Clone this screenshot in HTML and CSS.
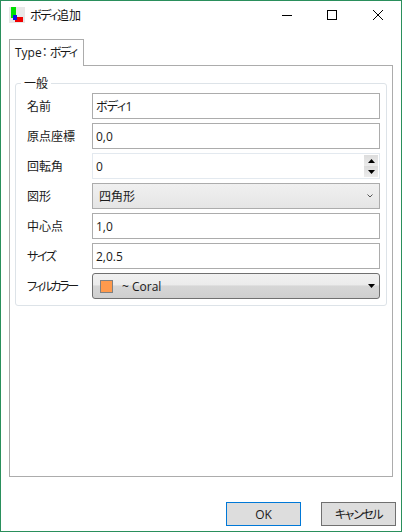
FILE: index.html
```html
<!DOCTYPE html>
<html lang="ja">
<head>
<meta charset="utf-8">
<title>ボディ追加</title>
<link rel="stylesheet" href="styles.css">
</head>
<body>
<div class="window">
  <header class="titlebar">
    <svg class="app-icon" width="16" height="16" viewBox="0 0 16 16">
      <rect x="0" y="0" width="16" height="16" fill="#e8e8e8"/>
      <rect x="2" y="0" width="5" height="11" fill="#00e000"/>
      <rect x="6" y="10" width="8" height="5" fill="#f00000"/>
      <rect x="4" y="8" width="4" height="5" fill="#1010e0"/>
    </svg>
    <span class="title"><span class="kana">ボディ</span>追加</span>
    <div class="caption">
      <svg width="46" height="28" viewBox="0 0 46 28"><path d="M19 14.500h10" stroke="#000" fill="none"/></svg>
      <svg width="46" height="28" viewBox="0 0 46 28"><rect x="18.500" y="9.500" width="9" height="9" stroke="#000" fill="none"/></svg>
      <svg width="46" height="28" viewBox="0 0 46 28"><path d="M18 9l10 10M28 9l-10 10" stroke="#000" fill="none"/></svg>
    </div>
  </header>
  <main class="content">
    <div class="tabstrip"><div class="tab"><span class="tab-type">Type：</span><span class="kana">ボディ</span></div></div>
    <section class="panel">
      <fieldset class="group">
        <legend class="legend">一般</legend>
        <div class="form">
          <label class="lbl">名前</label>
          <div class="field"><span class="kana kana-loose">ボディ</span>1</div>
          <label class="lbl">原点座標</label>
          <div class="field">0,0</div>
          <label class="lbl">回転角</label>
          <div class="field field-spin">
            <span>0</span>
            <div class="spin">
              <div class="spin-btn"><svg width="7" height="4" viewBox="0 0 7 4"><path d="M3.500 0L7 4H0z" fill="#000"/></svg></div>
              <div class="spin-btn"><svg width="7" height="4" viewBox="0 0 7 4"><path d="M0 0h7L3.500 4z" fill="#000"/></svg></div>
            </div>
          </div>
          <label class="lbl">図形</label>
          <div class="combo">
            <span>四角形</span>
            <svg width="6" height="4" viewBox="0 0 6 4"><path d="M.5 .5L3 3L5.500 .5" stroke="#555" fill="none"/></svg>
          </div>
          <label class="lbl">中心点</label>
          <div class="field">1,0</div>
          <label class="lbl"><span class="kana">サイズ</span></label>
          <div class="field">2,0.5</div>
          <label class="lbl"><span class="kana kana-tight">フィルカラー</span></label>
          <div class="color">
            <i class="swatch"></i>
            <span class="color-name">~ Coral</span>
            <svg width="7" height="4" viewBox="0 0 7 4"><path d="M0 0h7L3.500 4z" fill="#000"/></svg>
          </div>
        </div>
      </fieldset>
    </section>
    <footer class="actions">
      <button class="btn btn-default">OK</button>
      <button class="btn btn-cancel"><span class="kana">キャンセル</span></button>
    </footer>
  </main>
</div>
</body>
</html>
```
FILE: styles.css
```css
* { box-sizing: border-box; }
html, body { margin: 0; padding: 0; background: #fff; }
body {
  font-family: "Open Sans", "Noto Sans CJK JP", sans-serif;
  font-size: 12px;
  color: #1a1a1a;
}
.kana { font-feature-settings: "palt"; letter-spacing: -1.4px; }
.kana-tight { letter-spacing: -2.2px; }
.kana-loose { letter-spacing: -0.6px; }
.tab-type { font-feature-settings: "palt"; margin-right: 2px; }
.window {
  width: 402px;
  height: 532px;
  border: 1px solid #2a8f5c;
  display: flex;
  flex-direction: column;
  background: #fff;
}
.titlebar {
  height: 28px;
  display: flex;
  align-items: center;
  padding-left: 8px;
  flex: none;
}
.app-icon { flex: none; }
.title { margin-left: 5px; font-size: 12px; color: #111; }
.caption { margin-left: auto; display: flex; }
.caption svg { display: block; }
.content {
  flex: 1;
  display: flex;
  flex-direction: column;
  padding: 10px 5px 5px 8px;
  min-height: 0;
}
.tabstrip { display: flex; height: 26px; flex: none; position: relative; z-index: 1; }
.tab {
  width: 75px;
  height: 27px;
  border: 1px solid #acacac;
  border-bottom: 0;
  background: #fff;
  padding: 3px 0 0 5px;
  line-height: 20px;
  white-space: nowrap;
}
.panel {
  width: 384px;
  height: 412px;
  flex: none;
  border: 1px solid #acacac;
  padding: 10px 5px 0 5px;
}
.group {
  margin: 0;
  height: 230px;
  padding: 0 5px 0 6px;
  border: 1px solid #dde3e8;
  border-radius: 3px;
}
.legend {
  margin-left: -1px;
  padding: 0 3px;
  line-height: 15px;
  font-size: 12px;
}
.form {
  display: grid;
  grid-template-columns: 70px 288px;
  grid-auto-rows: 26px;
  row-gap: 4px;
  margin-top: 2px;
}
.lbl { display: flex; align-items: center; padding-left: 5px; white-space: nowrap; }
.field {
  border: 1px solid #acacac;
  display: flex;
  align-items: center;
  padding-left: 3px;
  background: #fff;
}
.field-spin {
  border-color: #e3e9ef;
  justify-content: space-between;
  padding-right: 1px;
}
.spin { display: flex; flex-direction: column; width: 14px; height: 22px; }
.spin-btn {
  flex: 1;
  display: flex;
  align-items: center;
  justify-content: center;
  background: linear-gradient(#dcdcdc, #ececec);
}
.spin-btn svg { display: block; }
.combo {
  border: 1px solid #acacac;
  background: linear-gradient(#f0f0f0, #e5e5e5);
  display: flex;
  align-items: center;
  justify-content: space-between;
  padding: 0 6px 0 6px;
}
.combo svg { display: block; }
.color {
  border: 1px solid #707070;
  border-radius: 3px;
  background: linear-gradient(#f1f1f1 0, #ebebeb 45%, #d6d6d6 50%, #cfcfcf 100%);
  display: flex;
  align-items: center;
  padding: 0 4px 0 7px;
}
.swatch {
  width: 13px;
  height: 13px;
  background: #ff9a4d;
  border: 1px solid #808080;
  flex: none;
}
.color-name { margin-left: 9px; flex: 1; }
.actions {
  flex: 1;
  display: flex;
  justify-content: flex-end;
  align-items: flex-end;
  gap: 20px;
}
.btn {
  width: 75px;
  height: 24px;
  font: inherit;
  color: #1a1a1a;
  background: #dddddd;
  padding: 0;
}
.btn-default { border: 1px solid #0078d7; }
.btn-cancel { border: 1px solid #707070; }
```
